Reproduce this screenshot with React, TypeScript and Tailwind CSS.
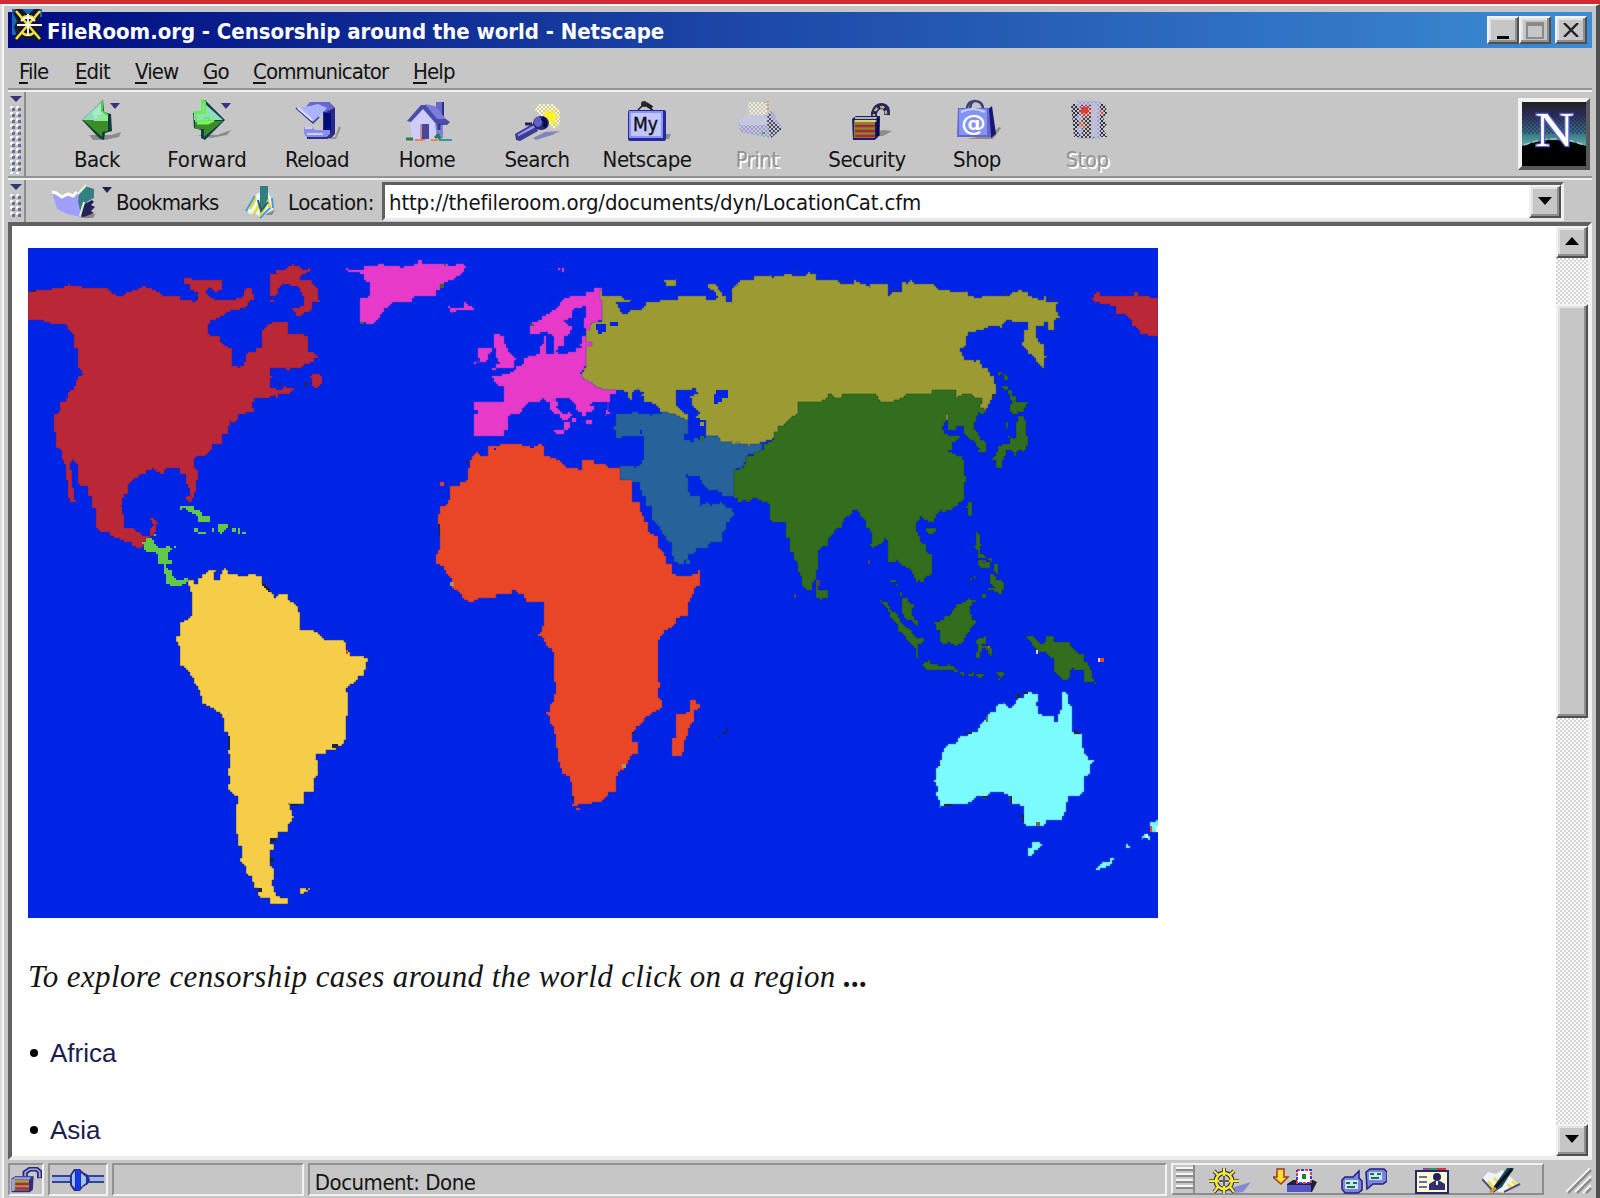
import type { ReactNode } from 'react';

const UI = "font-['DejaVu_Sans_Condensed','DejaVu_Sans',sans-serif] [font-stretch:condensed] text-[22px] leading-none whitespace-nowrap";

/* Turns a rough outline into a blocky one whose corners sit on a coarse grid. */
function blocky(outline: string, cell = 6): string {
  const pts = outline.trim().split(/\s+/).map((p) => p.split(',').map(Number));
  const snap = (v: number) => Math.round(v / cell) * cell;
  let d = `M${snap(pts[0][0])} ${snap(pts[0][1])}`;
  for (let i = 0; i < pts.length; i++) {
    const [ax, ay] = pts[i];
    const [bx, by] = pts[(i + 1) % pts.length];
    const n = Math.max(1, Math.ceil(Math.max(Math.abs(bx - ax), Math.abs(by - ay)) / cell));
    for (let k = 1; k <= n; k++) {
      d += `H${snap(ax + ((bx - ax) * k) / n)}V${snap(ay + ((by - ay) * k) / n)}`;
    }
  }
  return d + 'Z';
}

type Tile = { x: number; y: number; shapes: { fill: string; edge?: string; paths: string[] }[] };

const RED = '#ba2837';
const LIME = '#62c84a';
const GOLD = '#f6cd48';
const PINK = '#e83ac8';
const OLIVE = '#9c9a32';
const STEEL = '#28629a';
const ORANGE = '#e84626';
const GREEN = '#326e1e';
const CYAN = '#7afcfe';
const SEA = '#0024e6';

const tiles: Tile[] = [
  {
    x: 20, y: 240,
    shapes: [
      {
        fill: RED, edge: '#6a2070',
        paths: [
          '24,158 36,150 60,152 80,152 96,146 126,144 144,134 168,138 198,144 262,146 276,164 312,168 316,158 350,150 364,138 398,148 416,158 428,166 476,170 482,180 530,184 534,154 512,150 512,134 494,128 494,116 512,116 520,122 610,122 604,152 584,154 578,142 560,154 560,164 580,180 640,178 672,168 676,142 692,144 704,176 690,182 684,200 660,208 636,210 620,222 600,232 576,242 564,260 564,284 598,290 604,314 634,326 636,376 652,382 670,376 680,340 704,334 708,324 728,322 728,268 744,252 760,246 802,248 804,282 840,280 862,292 864,336 888,340 892,352 880,366 850,376 844,382 814,384 806,394 798,384 750,384 750,408 760,410 750,412 750,444 784,450 792,440 820,448 808,460 780,462 772,472 764,462 750,472 708,476 696,494 700,516 690,514 676,524 656,522 652,540 636,550 630,542 624,580 608,586 606,610 580,614 574,630 556,646 534,650 522,660 522,684 532,690 534,704 528,738 524,766 514,784 498,782 500,770 514,766 508,742 500,728 500,704 484,700 480,684 440,684 430,700 414,698 404,684 382,690 376,700 360,702 354,712 336,724 326,738 322,760 310,764 308,790 302,800 310,826 312,864 342,866 346,876 366,880 368,888 390,888 392,862 400,852 390,836 400,828 404,840 412,846 408,876 396,890 380,900 372,910 366,922 344,920 336,906 306,902 300,892 278,890 270,876 236,872 230,860 228,804 218,798 216,768 206,762 202,740 188,736 176,724 174,680 168,664 156,660 150,676 156,712 160,760 166,784 146,784 152,774 146,768 144,724 138,710 138,676 130,660 122,626 108,620 108,580 102,570 104,524 120,516 120,488 134,484 146,454 162,446 168,420 176,408 190,400 182,384 176,380 174,326 164,318 162,280 150,274 142,256 126,252 98,250 72,242 24,240',
          '752,104 772,102 766,92 790,90 796,84 816,74 838,80 846,92 862,86 874,88 864,98 844,106 842,120 870,122 880,140 892,146 892,172 898,184 880,186 874,212 852,218 846,226 820,224 826,216 814,206 832,204 850,192 850,168 840,154 842,142 820,138 804,132 786,136 774,148 774,164 762,168 752,168',
          '750,178 762,178 762,184 750,184',
          '874,404 888,400 904,408 906,434 892,446 878,434 878,416 868,416',
        ],
      },
      {
        fill: LIME,
        paths: [
          '368,908 380,906 380,896 394,896 404,912 414,924 444,920 456,924 452,936 442,940 444,958 456,960 454,970 440,974 440,986 452,990 456,1010 470,1018 506,1016 500,1030 482,1038 456,1036 438,1026 438,1004 432,996 432,970 410,968 416,952 410,936 372,932',
          '474,808 482,800 518,798 524,810 544,814 546,828 568,830 568,844 530,844 536,828 520,822 500,806',
          '522,864 534,864 534,876 522,876', '534,876 558,876 558,882 534,882', '576,864 582,864 582,876 576,876',
          '594,854 624,852 622,866 612,868 608,884 600,880 596,870',
          '636,864 648,864 648,876 636,876', '654,864 662,864 662,880 654,880', '666,876 678,876 678,882 666,882',
          '402,882 406,882 406,890 398,890', '462,918 468,918 468,924 462,924',
        ],
      },
      { fill: '#20285c', paths: ['774,426 780,426 780,438 774,438', '852,426 864,426 864,438 852,438', '840,270 846,270 846,276 840,276', '36,150 48,150 48,156 36,156', '528,168 534,168 534,178 528,178', '624,852 630,852 630,864 624,864'] },
    ],
  },
  {
    x: 160, y: 550,
    shapes: [
      {
        fill: GOLD, edge: '#3c4060',
        paths: [
          '84,88 96,86 102,100 114,100 114,86 126,84 128,74 144,60 172,60 162,72 162,90 180,90 182,70 192,56 204,58 206,72 240,76 280,74 304,80 306,102 320,108 332,128 344,142 356,134 384,134 386,150 408,164 414,186 420,188 420,240 460,242 474,250 490,270 546,270 560,280 560,298 572,316 606,318 624,328 618,346 612,376 600,380 582,400 564,410 558,426 564,436 566,480 558,510 558,570 548,588 520,600 500,600 498,612 470,612 472,650 474,670 462,690 462,724 432,726 432,762 386,764 394,784 400,804 386,824 384,846 352,848 356,864 344,876 332,880 342,888 340,898 330,904 330,950 342,956 342,990 334,1000 342,1020 352,1040 382,1046 384,1062 330,1060 328,1044 296,1040 296,1018 282,1010 276,980 264,976 254,940 242,932 246,890 234,880 230,840 228,780 234,740 222,730 206,718 208,680 204,660 210,640 206,600 206,550 192,540 192,506 180,488 156,472 130,462 120,430 114,410 104,398 92,370 78,352 60,344 60,290 48,272 50,258 60,256 60,218 84,204 98,186 96,130 88,114',
          '420,1014 440,1018 448,1014 448,1020 430,1030 420,1030',
        ],
      },
      { fill: '#1a2440', paths: ['516,582 534,582 534,594 516,594', '390,762 414,762 414,768 390,768', '330,864 348,864 348,876 330,876', '330,924 340,924 340,936 330,936', '294,1014 306,1014 306,1026 294,1026', '204,558 208,558 208,600 204,600', '306,102 312,102 324,114 330,126 324,120 312,108'] },
      { fill: ORANGE, paths: ['558,300 564,300 564,312 558,312'] },
    ],
  },
  {
    x: 340, y: 240,
    shapes: [
      {
        fill: OLIVE, edge: '#4c5a70',
        paths: [
          '786,150 788,168 846,170 850,178 876,180 870,186 828,188 834,206 846,224 862,222 870,210 904,208 920,188 976,180 1010,178 1012,170 1094,168 1100,178 1122,180 1132,168 1122,150 1106,144 1106,134 1130,134 1132,152 1144,156 1146,166 1160,170 1158,184 1176,184 1182,168 1178,150 1184,136 1206,122 1206,610 1146,608 1132,590 1098,588 1098,540 1068,530 1080,518 1070,504 1054,492 1058,476 1048,470 1072,456 1068,446 1040,450 1008,452 1006,500 1024,512 1030,522 1044,526 1044,540 1020,538 1000,524 966,520 954,498 936,488 910,482 912,470 902,466 910,458 896,446 876,456 876,478 866,474 866,454 838,450 830,448 786,448 760,438 730,418 722,402 738,380 738,270 750,250 786,242 788,190 776,180 776,150',
          '974,122 1006,116 1006,140 990,140 976,130',
        ],
      },
      {
        fill: PINK, edge: '#8a3ac8',
        paths: [
          '18,86 34,90 70,90 74,80 92,80 120,72 134,76 184,82 200,78 234,72 236,62 244,62 246,72 316,74 340,80 346,72 372,74 376,84 368,100 350,116 328,120 320,128 302,132 300,150 288,154 286,166 222,170 214,184 162,188 150,200 136,206 132,216 120,224 116,240 100,250 64,248 58,220 62,176 84,174 92,150 90,128 78,126 70,102 58,96 24,98',
          '326,200 346,204 370,206 374,188 384,190 386,200 402,202 400,208 352,210 336,220 332,210',
          '572,280 572,250 602,240 604,228 628,216 644,208 658,190 672,172 738,168 740,158 758,156 760,146 784,146 778,180 788,192 786,240 762,248 750,256 748,270 736,268 732,236 740,226 736,200 710,204 696,212 694,234 674,244 678,254 694,262 690,284 672,288 670,316 656,320 650,334 642,332 644,290 628,282 620,272 600,280',
          '600,344 602,316 610,312 612,290 618,292 618,340 650,338 664,342 704,334 706,326 728,322 722,310 728,290 738,290 740,304 756,308 754,316 738,320 738,380 722,402 730,418 756,428 760,438 786,448 830,452 826,460 808,464 808,486 802,504 808,520 800,526 802,488 760,488 750,498 764,506 756,514 738,516 736,530 726,530 724,514 710,512 706,490 690,474 636,478 652,490 650,506 664,520 688,518 694,530 686,542 668,540 660,524 642,518 632,504 630,488 620,484 614,474 592,486 568,488 552,506 540,520 510,524 502,540 504,568 494,570 490,586 402,586 402,522 414,520 412,512 402,506 404,486 492,486 494,444 486,436 470,434 458,408 486,408 490,400 520,398 530,380 552,370 554,356 572,346',
          '672,546 690,548 690,566 676,570 672,584 650,584 644,572 672,570', '738,542 756,542 756,550 738,550', '696,534 708,534 708,546 696,546',
          '462,284 494,286 490,306 500,326 510,340 520,350 526,360 520,382 468,382 470,372 482,370 470,350 470,338 464,320', '456,384 468,384 462,392 456,392',
          '414,326 456,324 454,334 444,344 440,366 416,366 402,370 418,360',
          '654,84 660,84 660,90 654,90', '666,84 672,84 672,96 666,96',
        ],
      },
      { fill: SEA, paths: ['766,252 796,254 798,278 782,280 766,264', '810,246 834,246 834,258 810,258', '1122,460 1130,452 1164,452 1164,476 1146,480 1142,488 1122,490'] },
      { fill: OLIVE, paths: ['1144,472 1158,472 1158,480 1144,480', '1062,498 1074,498 1074,506 1062,506', '1080,528 1098,528 1098,540 1080,540', '1080,546 1092,546 1092,556 1080,556'] },
      {
        fill: STEEL, edge: '#185090',
        paths: [
          '830,524 860,520 890,518 930,526 960,520 966,514 1000,524 1044,542 1042,580 1032,582 1034,600 1056,604 1064,594 1084,600 1100,590 1132,588 1146,608 1270,612 1264,632 1218,648 1212,680 1182,690 1182,768 1148,768 1144,754 1110,748 1092,732 1078,710 1040,704 1042,740 1050,768 1078,770 1080,796 1098,788 1110,796 1140,788 1150,800 1176,806 1180,826 1168,846 1158,850 1160,864 1146,880 1144,904 1110,906 1104,922 1070,926 1064,940 1048,944 1044,958 1030,970 1006,968 1000,960 996,908 980,896 970,880 960,860 936,836 938,800 920,796 916,770 904,756 900,726 876,724 846,720 838,718 838,690 830,682 870,676 880,684 900,676 912,650 914,590 886,588 850,590 836,596 828,586 828,568 812,564 828,556',
          '1038,960 1050,960 1050,970 1038,970',
        ],
      },
      { fill: SEA, paths: ['900,570 906,570 906,582 900,582'] },
      { fill: GREEN, paths: ['1080,588 1092,588 1092,600 1080,600', '300,132 312,132 312,142 300,142', '60,246 72,246 72,252 60,252', '312,72 320,72 320,78 312,78', '570,252 580,252 580,258 570,258'] },
    ],
  },
  {
    x: 420, y: 430,
    shapes: [
      {
        fill: ORANGE, edge: '#7c3468',
        paths: [
          '204,50 240,44 290,44 340,48 360,42 370,48 372,78 400,84 414,92 434,110 484,120 488,92 520,92 524,102 550,104 566,114 598,116 600,150 630,152 636,160 636,216 656,218 664,252 674,276 684,280 686,306 700,318 712,320 716,354 732,372 740,400 756,404 758,430 770,438 806,438 830,430 836,422 840,430 838,466 824,474 818,500 804,524 802,556 786,560 768,570 762,590 740,602 724,620 714,636 714,756 724,764 716,780 716,806 724,816 724,836 700,848 672,866 668,880 650,896 636,912 636,936 652,938 654,970 636,972 622,1000 612,1018 600,1020 588,1046 586,1084 570,1086 560,1102 544,1118 486,1120 470,1128 458,1124 460,1104 456,1076 450,1040 428,1028 420,1000 412,970 410,930 402,900 402,886 392,880 388,856 380,848 392,844 390,820 404,808 402,790 410,780 402,740 402,680 396,656 380,646 372,622 356,614 366,600 372,568 372,516 320,514 312,494 294,490 290,480 276,482 276,490 230,492 226,502 176,504 156,516 136,508 120,486 98,468 92,440 78,430 72,408 50,400 50,370 60,352 60,300 52,272 62,230 76,228 90,206 92,170 120,168 122,156 138,154 146,140 144,120 150,96 156,80 166,68 182,76 204,78',
          '822,806 828,820 838,824 838,836 820,842 822,860 818,880 808,884 806,912 796,930 790,960 788,976 758,976 758,926 768,920 768,854 790,852 810,842 812,812',
          '60,156 72,156 72,168 60,168', '468,1134 480,1134 480,1140 468,1140',
        ],
      },
      { fill: SEA, paths: ['330,46 342,46 342,54 330,54', '222,52 228,52 228,60 222,60'] },
      { fill: '#142864', paths: ['136,90 146,90 146,102 136,102', '54,282 60,282 60,318 54,318', '100,156 108,156 108,164 100,164', '906,906 918,906 918,912 906,912', '918,896 924,896 924,906 918,906', '894,918 900,918 900,924 894,924', '456,1098 462,1098 462,1110 456,1110', '638,906 648,906 648,912 638,912'] },
      { fill: '#a09a60', paths: ['90,456 102,456 102,466 90,466', '606,1002 618,1002 618,1012 606,1012'] },
    ],
  },
  {
    x: 700, y: 260,
    shapes: [
      {
        fill: OLIVE, edge: '#4c5a50',
        paths: [
          '98,122 98,86 114,70 118,62 162,60 164,50 200,50 208,44 214,52 246,46 266,40 284,48 306,50 322,38 350,46 350,58 410,60 420,70 462,70 464,62 496,76 508,82 512,74 560,74 566,106 574,96 602,94 608,64 618,64 620,74 632,62 640,72 698,74 712,90 778,96 796,92 804,106 836,116 848,108 926,110 934,96 960,92 982,96 988,110 1010,116 1026,122 1034,110 1040,124 1072,128 1068,152 1078,172 1062,182 1060,208 1046,208 1042,184 1030,188 1030,198 1008,200 1008,228 1016,246 1030,256 1030,286 1042,288 1032,298 1030,322 1014,308 1002,290 986,274 978,262 968,254 974,212 984,206 984,186 950,184 920,180 910,188 908,206 900,198 870,200 846,210 810,218 800,232 796,256 780,272 794,298 826,304 834,298 846,322 860,326 870,346 884,352 886,400 870,432 858,450 840,450 780,480 300,500 200,545 150,556 120,548 98,550',
        ],
      },
      { fill: OLIVE, paths: ['90,132 138,132 138,540 90,540', '102,90 138,78 138,140 102,140'] },
      { fill: '#20307c', paths: ['576,84 594,84 594,90 576,90', '282,30 288,30 288,42 282,42', '912,90 918,90 918,106 912,106', '1044,114 1060,114 1060,120 1044,120', '428,60 434,60 434,72 428,72', '876,402 886,402 886,416 876,416'] },
      {
        fill: GREEN, edge: '#28542c',
        paths: [
          '296,426 360,424 378,414 386,402 396,404 400,414 424,412 428,402 526,402 540,424 576,424 600,416 618,404 696,402 698,390 766,390 770,412 784,402 814,402 820,412 844,416 844,432 836,440 858,452 852,460 834,458 828,486 818,494 822,508 834,518 838,538 860,550 856,574 832,578 838,562 826,544 806,530 794,516 792,500 770,500 768,510 746,508 742,464 736,466 736,484 726,506 734,524 778,530 776,540 756,546 756,568 744,574 762,584 780,590 792,606 792,650 797,656 792,690 792,722 774,726 770,740 738,754 726,752 710,770 700,788 676,780 664,768 650,790 650,818 660,832 664,850 676,856 680,876 696,886 696,944 678,948 670,968 662,962 650,964 642,940 630,926 600,910 596,898 580,908 566,906 566,848 556,836 546,852 520,862 512,850 516,826 510,806 498,800 496,780 486,768 474,752 462,752 452,766 440,770 426,790 424,804 410,806 400,822 384,836 382,858 362,862 354,880 354,930 346,940 346,962 336,964 334,988 310,986 304,946 296,930 292,908 282,896 280,876 270,872 268,836 258,828 258,788 230,786 212,778 212,730 190,724 176,714 134,722 118,726 114,714 102,710 102,632 132,622 138,590 160,586 162,574 190,572 192,552 218,544 222,514 232,512 234,500 258,492 262,480 294,460',
        ],
      },
      {
        fill: GREEN, edge: '#1c3c50',
        paths: [
          '350,968 356,988 382,992 382,1012 366,1018 350,1010', '680,806 706,804 706,814 696,824 680,814', '804,724 816,722 816,768 806,766 800,740',
          '924,392 934,392 936,406 946,414 950,426 978,428 982,434 970,454 944,466 930,452 930,430 938,430',
          '952,470 968,470 978,490 976,526 984,530 984,556 972,574 958,570 946,586 936,572 920,570 920,580 912,600 904,602 904,622 890,622 890,600 878,594 890,580 892,562 906,554 930,550 932,540 926,530 942,538 948,524',
          '894,336 906,336 906,344 900,350 894,344', '912,344 922,348 922,362 912,360', '906,378 922,378 922,388 906,386', '918,484 926,490 920,508',
          '830,818 844,830 840,848 844,858 838,868 842,884 860,886 858,892 836,892 832,868 820,864 820,860 830,856 830,836 820,832 830,830',
          '836,900 866,904 872,924 850,926 836,914', '882,912 892,914 892,940 884,936', '866,894 876,894 876,906 870,906', '872,944 884,942 886,960 900,958 912,974 908,1000 890,998 876,990 860,996 862,986 886,982 870,966', '806,968 812,954 826,950 812,968', '848,1002 858,1002 858,1012 848,1012',
          '572,960 582,960 590,968 578,968', '574,976 594,974 594,980 574,980', '598,994 604,994 604,1010 598,1008',
        ],
      },
      { fill: '#504848', paths: ['136,720 148,720 148,726 136,726', '504,902 510,902 510,910 504,910', '282,1004 288,1004 288,1012 282,1012', '846,900 858,900 858,912 846,912', '350,962 358,962 358,980 350,980'] },
      { fill: RED, edge: '#6a2070', paths: ['1178,116 1188,98 1198,98 1200,108 1300,108 1304,96 1314,98 1314,108 1356,112 1374,116 1374,226 1350,226 1320,218 1316,202 1300,196 1296,182 1280,164 1256,162 1240,172 1248,154 1248,140 1230,134 1182,124'] },
    ],
  },
  {
    x: 860, y: 560,
    shapes: [
      {
        fill: GREEN, edge: '#1c3c50',
        paths: [
          '128,116 142,116 148,130 160,136 156,160 164,178 172,186 172,196 156,182 140,176 128,156',
          '62,122 76,126 86,138 92,152 110,162 120,184 134,200 158,212 158,224 170,236 186,234 196,242 184,250 174,258 174,292 168,290 166,264 140,236 138,226 116,210 114,190 90,170 86,150 74,136',
          '184,314 198,306 204,296 212,312 254,318 262,312 286,324 292,334 250,330 204,328', '298,334 314,338 314,348 298,342', '316,348 334,338 346,334 342,346 326,350', '350,340 378,342 368,354 356,350', '410,334 438,342 424,356 412,358 420,346',
          '224,186 248,180 256,166 276,164 278,148 288,140 290,130 312,128 322,116 346,124 334,138 330,152 336,178 350,184 350,194 332,208 330,218 316,226 312,246 290,260 270,248 252,254 242,238 240,212 228,206',
          '356,232 376,230 380,246 366,256 382,256 394,270 400,290 390,288 380,264 366,264 360,292 348,290 352,262 350,240',
          '500,230 520,230 528,240 538,252 558,246 560,230 580,230 584,246 624,248 640,268 654,282 670,286 672,306 682,308 682,320 692,332 696,350 706,372 694,364 674,364 670,332 640,326 630,336 630,348 624,358 600,356 594,340 584,330 584,296 570,290 558,278 530,270 522,256 512,242',
        ],
      },
      { fill: '#d8d0ff', paths: ['528,270 534,270 534,282 528,282', '714,296 720,296 720,306 714,306'] },
      { fill: ORANGE, paths: ['720,296 734,296 734,306 720,306', '384,256 390,256 390,266 384,266'] },
      {
        fill: CYAN, edge: '#4c90c8',
        paths: [
          '496,398 516,396 518,404 534,404 530,440 536,462 552,468 580,470 584,486 592,484 594,460 604,446 608,398 620,398 624,430 634,440 636,518 664,526 666,560 674,584 686,586 686,600 702,604 690,618 688,640 674,656 672,694 660,708 626,710 618,740 616,758 606,778 566,780 550,796 506,796 494,784 490,736 454,732 448,708 434,696 392,696 380,712 362,710 350,710 344,720 326,732 262,734 242,742 236,714 228,706 234,676 224,662 230,626 240,610 244,590 256,560 272,552 292,546 298,530 320,528 332,518 350,514 362,490 378,478 386,460 404,456 410,436 430,428 444,442 456,440 470,418 492,412',
          '514,848 536,848 544,856 534,870 520,874 518,886 504,886 506,866 518,862',
          '708,926 724,908 750,908 752,892 760,892 758,908 748,920 724,922 720,930', '798,854 812,858 802,866', '846,838 850,824 864,820 868,840 858,832', '872,784 894,782 894,816 874,814',
        ],
      },
      { fill: '#282838', paths: ['468,402 480,402 480,412 468,412', '486,394 502,394 502,400 486,400', '318,518 334,518 334,524 318,524', '640,512 662,518 662,524 640,518', '450,708 458,708 458,732 450,732', '486,762 492,762 492,784 486,784', '250,734 274,734 274,740 250,740', '364,708 382,708 382,714 364,714', '232,610 238,610 238,618 232,618', '514,848 518,848 518,858 514,858'] },
      { fill: '#6c6c4c', paths: ['378,470 386,470 386,486 378,486', '528,784 540,784 540,796 528,796'] },
      { fill: '#fff2c8', paths: ['888,798 894,798 894,814 888,814', '858,820 866,820 866,832 858,832'] },
      { fill: ORANGE, paths: ['870,796 876,796 876,814 870,814'] },
    ],
  },
];

function WorldMap() {
  return (
    <svg className="block h-[670px] w-[1130px]" viewBox="28 248 1130 670" role="img" aria-label="World map">
      <rect x="28" y="248" width="1130" height="670" fill={SEA} />
      {tiles.map((t, i) => (
        <g key={i} transform={`translate(${t.x} ${t.y}) scale(0.33333)`}>
          {t.shapes.map((s, j) => (
            <path key={j} d={s.paths.map((p) => blocky(p)).join('')} fill={s.fill} stroke={s.edge ?? 'none'} strokeWidth={s.edge ? 1.6 : 0} />
          ))}
        </g>
      ))}
    </svg>
  );
}

/* ---------- toolbar icons, each on a 60 x 44 field ---------- */

const Field = ({ children }: { children: ReactNode }) => (
  <svg className="h-[44px] w-[60px]" viewBox="0 0 60 44">
    <defs>
      <pattern id="dots" width="4" height="4" patternUnits="userSpaceOnUse">
        <rect width="2" height="2" fill="#c6c6c6" />
        <rect x="2" y="2" width="2" height="2" fill="#c6c6c6" />
      </pattern>
    </defs>
    {children}
  </svg>
);

const BackIcon = () => (
  <Field>
    <path d="M22 37h22l10-3-2 5-14 3H26z" fill="#8c8c8c" />
    <path d="M15 22 36 2l1 12 7 2 1 17-7 2-1 7-5-2z" fill="#123c3c" />
    <path d="M15 22 35 3v10l6 3v6z" fill="#8fdcb8" />
    <path d="M25 15 34 6v7l6 4v5H28z" fill="#a8e8cc" />
    <path d="M16 22h25v11l-6 1v5z" fill="#3c8c28" />
    <path d="M26 23h15v-6l-6-2-1 2h-4v3z" fill="#8ce89c" />
    <path d="M35 3v10l6 4" stroke="#50d040" strokeWidth="2" fill="none" />
    <path d="M43 5h10l-5 6z" fill="#34347c" />
  </Field>
);
const ForwardIcon = () => (
  <Field>
    <path d="M20 37h20l14-5-4 5-16 3z" fill="#8c8c8c" />
    <path d="M16 14h8V3l4-1 20 20-20 20-4-2v-8l-7-2z" fill="#123c4c" />
    <path d="M17 15h9V4l20 18H17z" fill="#8fdcb8" />
    <path d="M18 23h28L27 39v-8h-9z" fill="#3c8c28" />
    <path d="M16 14h9V2l3 2v11h-9v8h13v-3h-5" stroke="#64f050" strokeWidth="2" fill="none" />
    <path d="M20 25h11l6-3" stroke="#7cf060" strokeWidth="3" fill="none" />
    <path d="M44 5h10l-5 6z" fill="#34347c" />
  </Field>
);
const ReloadIcon = () => (
  <Field>
    <path d="M22 39h26l4-11 2 2-5 11H26z" fill="#949494" />
    <path d="M36 4h6l6 6v26l-4 4H32v-8h4z" fill="#28288c" />
    <path d="M37 15h7v18h-7z" fill="#000c78" />
    <path d="M18 10 23 4h19l5 6-8 4z" fill="#6868d0" />
    <path d="m9 10 14-2 8-2 9 4-14 15z" fill="#aab4ff" />
    <path d="m9 10 17 15 6-6" stroke="#3c3c90" strokeWidth="1.6" fill="none" />
    <path d="m11 10 14 12" stroke="#e0e4ff" strokeWidth="2" />
    <path d="M17 29h8l3 3h15v4l-4 4H20l-3-4z" fill="#8c8cec" />
    <path d="M18 30h7M20 36h16" stroke="#d0d0ff" strokeWidth="2" />
    <path d="M20 40h20l5-4" stroke="#30308c" strokeWidth="2" fill="none" />
  </Field>
);
const HomeIcon = () => (
  <Field>
    <path d="M39 4h7v17h-7z" fill="#6868d0" />
    <path d="M45 4h2v16h-2z" fill="#30307c" />
    <path d="M13 23 26 10l15 13v18H15z" fill="#ccccff" />
    <path d="M38 26h8v14h-6z" fill="#8080dc" />
    <path d="M24 7h5l24 17-3 3H40L26 11 14 24l-4-1z" fill="#4c4ca8" />
    <path d="m28 6 10 2 11 13H40z" fill="#7c7ce0" />
    <path d="M24 26h8v15h-8z" fill="#484898" />
    <path d="M24 26v14" stroke="#d88888" strokeWidth="2" />
    <path d="M42 26v6" stroke="#283890" strokeWidth="3" />
    <path d="M9 41h7M38 40l3-3 2 4" stroke="#288048" strokeWidth="3" fill="none" />
    <path d="M18 42h10M34 42h7" stroke="#e48850" strokeWidth="2" />
    <path d="M42 42h13" stroke="#389898" strokeWidth="2" />
  </Field>
);
const SearchIcon = () => (
  <Field>
    <path d="M28 12l4-6h14l7 7v13l-5 5-7-4z" fill="#fffbb8" />
    <path d="M28 12l4-6h14l7 7v13l-5 5-7-4z" fill="url(#dots)" />
    <path d="m37 16 3-6 2 5 8-5-4 7 8 1-8 3 5 7-9-4z" fill="#fff020" />
    <path d="M26 40l12-6 15-1-8 4-16 5z" fill="#8484bc" />
    <path d="M8 36 27 25l4 8-18 10-4-1z" fill="#3c3c90" />
    <path d="M10 37 27 27l2 2-17 9z" fill="#9898f4" />
    <path d="M18 26h7" stroke="#20205c" strokeWidth="3" />
    <ellipse cx="34" cy="25" rx="8" ry="7" fill="#282878" />
    <ellipse cx="31" cy="24" rx="4" ry="5" fill="#6060c8" />
    <path d="M35 20q6 4 2 9" fill="none" stroke="#08084c" strokeWidth="4" />
  </Field>
);
const NetscapeIcon = () => (
  <Field>
    <path d="M21 12 27 6l10 7" stroke="#202020" strokeWidth="1.5" fill="none" />
    <path d="M29 6l6 4" stroke="#202020" strokeWidth="4" />
    <circle cx="27" cy="6" r="3" fill="#282828" />
    <path d="M49 36h5l-2 5h-6z" fill="#8c8c94" />
    <rect x="11" y="12" width="38" height="31" rx="2" fill="#2428a0" />
    <rect x="12" y="13" width="34" height="27" fill="#8c94f0" />
    <rect x="14" y="15" width="30" height="23" fill="#c0c8ff" />
    <text x="16" y="33" fontFamily="DejaVu Sans Condensed" fontSize="20" fill="#101010" stroke="#101010" strokeWidth=".4" textLength="25" lengthAdjust="spacingAndGlyphs">My</text>
  </Field>
);
const PrintIcon = () => (
  <Field>
    <path d="M21 4h19v16H22z" fill="#fffad8" opacity=".7" />
    <path d="M38 4h3v8" stroke="#d8a060" strokeWidth="2" fill="none" />
    <path d="m11 22 8-5h22l5-3 9 16-12 10-30-6z" fill="#9c9ce0" />
    <path d="m11 22 8-5h18l5 6-4 4H13z" fill="#c8c8f4" />
    <path d="M41 16l4-4-2 7 12 12-11 9-4-15z" fill="#484870" />
    <rect width="60" height="44" fill="url(#dots)" />
    <rect x="35" y="34" width="3" height="2" fill="#30b030" />
  </Field>
);
const LockShape = () => (
  <>
    <path d="M38 38h8l9-5-8-1-6 1z" fill="#8c8c8c" />
    <path d="M37 21v-6q2-7 8-7 6 1 5 9" stroke="#242464" strokeWidth="6" fill="none" />
    <path d="M37 20v-5q2-6 8-6 4 1 4 7" stroke="#d0b060" strokeWidth="2.5" fill="none" strokeDasharray="4 3" />
    <path d="M15 21l4-3h24l-1 20-4 4H16z" fill="#1c1c70" />
    <path d="M17 22h21v18H17z" fill="#8c8428" />
    <path d="M18 23h22M18 20h22" stroke="#f0e8a8" strokeWidth="1.6" />
    <path d="M18 28h20M18 33h20M18 38h20" stroke="#a82840" strokeWidth="2.6" />
    <path d="M41 20v18" stroke="#080848" strokeWidth="3" />
  </>
);
const SecurityIcon = () => <Field><LockShape /></Field>;
const ShopIcon = () => (
  <Field>
    <path d="M20 41h26l8-11-2-1-7 7z" fill="#8c8c8c" />
    <path d="M20 12q0-9 8-9t8 9M27 3q-4 2-4 10" stroke="#404078" strokeWidth="2.5" fill="none" />
    <path d="m40 12 5-4 4 28-5 4z" fill="#181870" />
    <path d="M11 10h31l2 29H10z" fill="#6464d4" />
    <path d="M12 11h28v26H12z" fill="#8494f4" />
    <path d="M14 14q12-6 24 0" stroke="#c4d4ff" strokeWidth="2" fill="none" />
    <text x="14" y="33" fontFamily="DejaVu Sans" fontWeight="bold" fontSize="23" fill="#fff" textLength="25" lengthAdjust="spacingAndGlyphs">@</text>
  </Field>
);
const StopIcon = () => (
  <Field>
    <path d="M20 3h24v38H20z" fill="#a0a0e8" />
    <path d="M14 6h5l5 9-5 5 5 6-5 5 5 8h-7M43 6h5l2 9-4 5 4 6-4 5 5 8h-8" fill="#303048" />
    <path d="M24 7h14v8l-4 5 4 8-4 4 3 8H23l3-8-4-6 4-6-4-6z" fill="#404048" />
    <path d="M34 5h6v34h-6z" fill="#b8b8e8" />
    <circle cx="28" cy="13" r="6" fill="#e03030" />
    <path d="M23 23l5 7M45 12v5" stroke="#e05040" strokeWidth="4" />
    <rect width="60" height="44" fill="url(#dots)" />
    <path d="M24 9h7v6h-7z" fill="#d84040" />
  </Field>
);

const buttons: { label: string; icon: () => ReactNode; off?: boolean }[] = [
  { label: 'Back', icon: BackIcon },
  { label: 'Forward', icon: ForwardIcon },
  { label: 'Reload', icon: ReloadIcon },
  { label: 'Home', icon: HomeIcon },
  { label: 'Search', icon: SearchIcon },
  { label: 'Netscape', icon: NetscapeIcon },
  { label: 'Print', icon: PrintIcon, off: true },
  { label: 'Security', icon: SecurityIcon },
  { label: 'Shop', icon: ShopIcon },
  { label: 'Stop', icon: StopIcon, off: true },
];

const WheelIcon = () => (
  <svg className="h-[33px] w-[32px] shrink-0" viewBox="0 0 32 33">
    <path d="M0 0h30v8H22v18H0z" fill="#1868b8" />
    <path d="M4 0h6l6 6 6-6h6v8l-4 8 6 2-5 4 5 8-6 3-6-5-2 5-4-5-6 4H2l2-8-2-6 3-6-4-8z" fill="#18182c" />
    <g stroke="#f0e040" strokeWidth="2.6" fill="none"><path d="M4 2l24 28M28 2 4 30" /><path d="M9 10q7-6 14 0M9 23q7 6 14 0" /></g>
    <path d="M16 5v22M5 16h25M9 12q7-7 14 0" stroke="#fff" strokeWidth="1.8" fill="none" />
  </svg>
);

const Grip = ({ tall }: { tall?: boolean }) => (
  <div className="flex w-[18px] flex-col items-center border-r-2 border-[#8c8c8c] pt-[4px]">
    <svg className="h-[6px] w-[12px]" viewBox="0 0 12 6"><path d="M0 0h12L6 6z" fill="#34347c" /></svg>
    <svg className={tall ? 'mt-[4px] h-[68px] w-[12px]' : 'mt-[4px] h-[24px] w-[12px]'}>
      <defs>
        <pattern id="grip" width="6" height="6" patternUnits="userSpaceOnUse">
          <rect width="3" height="3" fill="#f4f4f4" />
          <rect x="2" y="2" width="3" height="3" fill="#6c6c98" />
        </pattern>
      </defs>
      <rect width="12" height="68" fill="url(#grip)" />
    </svg>
  </div>
);

const RAISED = 'border-2 border-t-[#f2f2f2] border-l-[#f2f2f2] border-r-[#505050] border-b-[#505050] bg-[#c6c6c6] shadow-[inset_-2px_-2px_0_#8e8e8e,inset_2px_2px_0_#e2e2e2] flex items-center justify-center shrink-0';

const Tri = ({ up }: { up?: boolean }) => (
  <svg className="mb-[2px] h-[8px] w-[14px]" viewBox="0 0 14 8"><path d={up ? 'M0 8h14L7 0z' : 'M0 0h14L7 8z'} fill="#000" /></svg>
);

const Rule = () => (
  <div className="h-[4px] shrink-0 border-t-2 border-b-2 border-t-[#929292] border-b-[#f0f0f0]" />
);

const menus = ['File', 'Edit', 'View', 'Go', 'Communicator', 'Help'];

const SINK = 'border-2 border-t-[#929292] border-l-[#929292] border-r-[#f2f2f2] border-b-[#f2f2f2] flex items-center overflow-hidden';

export default function App() {
  return (
    <div className="flex h-[1198px] w-[1600px] flex-col overflow-hidden bg-[#c6c6c6] text-[#141414]">
      <div className="h-[4px] shrink-0 bg-[#d02c32]" />
      <div className="flex min-h-0 flex-1 flex-col border-l-2 border-[#dcdcdc]">
        <div className="flex min-h-0 flex-1 flex-col border-t-2 border-l-2 border-r-[4px] border-t-[#f2f2f2] border-l-[#f6f6f6] border-r-[#505050] pt-[6px] pr-[4px] pl-[4px]">
          {/* title bar */}
          <div className="flex h-[36px] shrink-0 items-center bg-[linear-gradient(to_right,#000c80,#3c8cd4)] pr-[5px]">
            <div className="-mt-[6px] ml-[4px] h-[36px]"><WheelIcon /></div>
            <div className="mt-[3px] ml-[3px] flex-1 font-['DejaVu_Sans_Condensed','DejaVu_Sans',sans-serif] text-[22px] leading-none font-bold tracking-[-0.05px] whitespace-nowrap text-white [font-stretch:condensed]">
              FileRoom.org - Censorship around the world - Netscape
            </div>
            <div className={`${RAISED} h-[28px] w-[32px]`}><div className="mt-[14px] h-[3px] w-[12px] bg-black" /></div>
            <div className={`${RAISED} h-[28px] w-[32px]`}><div className="h-[17px] w-[18px] border-2 border-t-4 border-[#8a8a8a]" /></div>
            <div className={`${RAISED} ml-[4px] h-[28px] w-[32px]`}>
              <svg className="h-[14px] w-[16px]" viewBox="0 0 16 14"><path d="M1 0l14 14M15 0 1 14" stroke="#222" strokeWidth="2.4" /></svg>
            </div>
          </div>

          {/* menu bar */}
          <div className={`${UI} flex h-[40px] shrink-0 items-center pt-[8px] pl-[11px] tracking-[-0.9px]`}>
            {menus.map((m, i) => (
              <span key={m} className={['w-[56px]', 'w-[60px]', 'w-[68px]', 'w-[50px]', 'w-[160px]', 'w-[60px]'][i]}>
                <span className="underline decoration-2 underline-offset-[3px]">{m[0]}</span>{m.slice(1)}
              </span>
            ))}
          </div>
          <Rule />

          {/* navigation toolbar */}
          <div className="flex h-[84px] shrink-0">
            <Grip tall />
            <div className="ml-[16px] grid flex-1 grid-cols-[repeat(10,110px)]">
              {buttons.map(({ label, icon: Icon, off }) => (
                <div key={label} className="flex flex-col items-center pt-[6px]">
                  <Icon />
                  <span className={`${UI} mt-[7px] ${label === 'Forward' ? 'tracking-[0px]' : 'tracking-[-0.5px]'} ${off ? 'text-[#949494] [text-shadow:2px_2px_0_#fff]' : ''}`}>{label}</span>
                </div>
              ))}
            </div>
            <div className="mt-[6px] mr-[2px] h-[72px] w-[72px] shrink-0 border-[4px] border-t-[#f2f2f2] border-r-[#585858] border-b-[#585858] border-l-[#f2f2f2]">
              <svg className="block h-[64px] w-[64px]" viewBox="0 0 64 64">
                <defs>
                  <linearGradient id="dusk" x1="0" y1="0" x2="0" y2="1">
                    <stop offset="0" stopColor="#202020" />
                    <stop offset=".22" stopColor="#30305c" />
                    <stop offset=".5" stopColor="#387888" />
                    <stop offset=".7" stopColor="#68b0a8" />
                  </linearGradient>
                  <pattern id="haze" width="4" height="4" patternUnits="userSpaceOnUse">
                    <rect width="2" height="2" fill="#202048" opacity=".45" />
                    <rect x="2" y="2" width="2" height="2" fill="#202048" opacity=".45" />
                  </pattern>
                </defs>
                <rect width="64" height="64" fill="url(#dusk)" />
                <rect y="4" width="64" height="28" fill="url(#haze)" />
                <path d="M0 44Q32 32 64 44v20H0z" fill="#000" />
                <path d="M2 43Q32 31 62 43" stroke="#9cc8c0" strokeWidth="1.5" fill="none" strokeDasharray="6 3" />
                <text x="13" y="44" fontFamily="Liberation Serif" fontSize="48" stroke="#5c5cd0" strokeWidth="2.4" fill="#fff" paintOrder="stroke" textLength="39" lengthAdjust="spacingAndGlyphs">N</text>
              </svg>
            </div>
          </div>
          <Rule />

          {/* location toolbar */}
          <div className="flex h-[42px] shrink-0">
            <Grip />
            <svg className="mt-[4px] ml-[25px] h-[36px] w-[62px]" viewBox="0 0 62 36">
              <path d="M30 30h14l2-3-4 7H30z" fill="#888" />
              <path d="m28 32 2-10 11-6 2 2-3 3 4 2-4 4 3 2-10 4z" fill="#24245c" />
              <path d="M1 8l4 1 6 4 6-3 6 2 4-5 2 8 1 18-14-3-10-5z" fill="#a0a0fc" />
              <path d="M1 8l4 1 6 4 6-3 5 2 4-4" stroke="#fff" strokeWidth="3" fill="none" />
              <path d="m28 9 8-7h-2l9 3v9l-6 3-8 9-2-8z" fill="#348080" />
              <path d="m27 10 8-9M29 32l4-14" stroke="#e8f4d8" strokeWidth="2" />
              <path d="M51 3h10l-5 6z" fill="#202050" />
            </svg>
            <span className={`${UI} mt-[12px] ml-[3px] w-[129px] tracking-[-0.9px]`}>Bookmarks</span>
            <svg className="mt-[4px] h-[36px] w-[36px]" viewBox="0 0 36 36">
              <path d="m16 32 14-6-3 5H14z" fill="#888" />
              <path d="m2 25 7-12 4-4 10-1 4 8 1 9-12 9-6-5-6 1z" fill="#e8f8ff" />
              <path d="m1 27 9-15M26 23l-11 11M27 14l1 10" stroke="#4898e0" strokeWidth="2" />
              <path d="m11 14-6 11M9 30l6-11M15 32l6-10M22 14l3 10" stroke="#e8d820" strokeWidth="2.4" />
              <path d="M15 2h8v12l-4 10-4 2z" fill="#308080" />
              <path d="m13 16 3 11 7-9" stroke="#206070" strokeWidth="2" fill="none" />
            </svg>
            <span className={`${UI} mt-[12px] ml-[7px] w-[94px] tracking-[-0.5px]`}>Location:</span>
            <div className="mt-[2px] flex h-[39px] w-[1182px] border-[3px] border-t-[#606060] border-r-[#f0f0f0] border-b-[#e8e8e8] border-l-[#606060] bg-white">
              <span className={`${UI} mt-[7px] ml-[4px] flex-1 tracking-[-0.17px]`}>http://thefileroom.org/documents/dyn/LocationCat.cfm</span>
              <div className={`${RAISED} h-[33px] w-[32px]`}><Tri /></div>
            </div>
          </div>

          {/* page */}
          <div className="flex h-[938px] shrink-0 border-t-[4px] border-r-[4px] border-b-[4px] border-l-[4px] border-t-[#606060] border-r-[#f2f2f2] border-b-[#ececec] border-l-[#606060]">
            <div className="flex-1 overflow-hidden bg-white pt-[22px] pl-[16px]">
              <WorldMap />
              <p className="mt-[41px] font-['Liberation_Serif',serif] text-[31px] leading-[36px] tracking-[0.38px] whitespace-nowrap italic">
                To explore censorship cases around the world click on a region <b>...</b>
              </p>
              <ul className="mt-[39px] flex flex-col gap-[40px] font-['Liberation_Sans',sans-serif] text-[26px] leading-[36px] text-[#1c1c50]">
                {['Africa', 'Asia'].map((r) => (
                  <li key={r} className="flex items-center">
                    <span className="mt-[1px] ml-[2px] h-[8px] w-[8px] rounded-full bg-black" />
                    <span className="mt-[1px] ml-[12px]">{r}</span>
                  </li>
                ))}
              </ul>
            </div>
            <div className="flex w-[32px] flex-col bg-[repeating-conic-gradient(#fafafa_0_25%,#d4d4d4_0_50%)] bg-[length:4px_4px]">
              <div className={`${RAISED} h-[32px] w-[32px]`}><Tri up /></div>
              <div className={`${RAISED} mt-[46px] h-[414px] w-[32px]`} />
              <div className={`${RAISED} mt-auto h-[32px] w-[32px]`}><Tri /></div>
            </div>
          </div>

          {/* status bar */}
          <div className="mt-[3px] flex h-[33px] shrink-0">
            <div className={`${SINK} w-[36px]`}>
              <svg className="h-[27px] w-[34px]" viewBox="12 2 42 42" preserveAspectRatio="none">
                <path d="M32 18v-6l6-5h9l4 4v10" stroke="#242478" strokeWidth="7" fill="none" />
                <path d="M32 18v-6l6-5h9l4 4v9" stroke="#a0a8e8" strokeWidth="2.4" fill="none" />
                <path d="M14 21l5-3h24l-1 21-4 4H14z" fill="#2c2c80" />
                <path d="M17 23h20v17H17z" fill="#a89840" />
                <path d="M16 22v19M17 21h22" stroke="#98a8f0" strokeWidth="3" />
                <path d="M19 30h18M19 37h18" stroke="#a82848" strokeWidth="4" />
              </svg>
            </div>
            <div className={`${SINK} ml-[4px] w-[60px]`}>
              <svg className="h-[24px] w-[56px]" viewBox="0 0 56 24">
                <path d="M2 8h18M2 14h18M36 8h18M36 14h18" stroke="#404090" strokeWidth="2" />
                <path d="M2 11h52" stroke="#98b8e8" strokeWidth="4" />
                <path d="M20 7 24 1h6l3 3 5 3 2 5-2 4-5 3-3 4h-6l-4-6z" fill="#2c2c90" />
                <path d="M22 7 25 3v17l-3-3zM31 5l5 4v6l-5 4z" fill="#98c8f8" />
                <path d="M28 2v20" stroke="#1838f0" strokeWidth="4" />
              </svg>
            </div>
            <div className={`${SINK} ml-[4px] w-[192px]`} />
            <div className={`${SINK} ml-[4px] w-[860px]`}>
              <span className={`${UI} mt-[6px] ml-[5px] tracking-[-0.5px]`}>Document: Done</span>
            </div>
            <div className="ml-[4px] flex h-[32px] w-[373px] items-center border-2 border-t-[#f2f2f2] border-r-[#8c8c8c] border-b-[#8c8c8c] border-l-[#f2f2f2]">
              <div className="ml-[3px] h-[24px] w-[17px] bg-[repeating-linear-gradient(to_bottom,#f6f6f6_0_2px,#8c8c8c_2px_4px,#c6c6c6_4px_6px)]" />
              <div className="h-full w-[2px] bg-[#8c8c8c]" />
              <svg className="mt-[3px] ml-[12px] h-[26px] w-[44px]" viewBox="0 0 44 26">
                <path d="m24 20 20-6-8 10-10 1z" fill="#8888d0" />
                <path d="M17 0v26M2 13h30M7 3l20 21M27 3 7 24" stroke="#283060" strokeWidth="4" />
                <circle cx="17" cy="13" r="8" fill="#c6c6c6" stroke="#283060" strokeWidth="5" />
                <path d="M17 0v26M2 13h30M7 3l4 4M23 19l4 5M27 3l-4 4M11 19l-4 5" stroke="#f8e830" strokeWidth="2.4" />
                <circle cx="17" cy="13" r="8" fill="none" stroke="#f8e830" strokeWidth="2.6" />
                <path d="M17 8v10M12 13h10" stroke="#5c5c70" strokeWidth="2" />
              </svg>
              <svg className="mt-[3px] ml-[22px] h-[26px] w-[44px]" viewBox="0 0 44 26">
                <path d="M4 1h7v8h4l-7 7-8-7h4z" fill="#f8e030" stroke="#a03820" strokeWidth="1.5" />
                <path d="m14 16 6-4h20l4 2-5 10H14z" fill="#20203c" />
                <path d="M14 17h24v7H14z" fill="#5454c4" />
                <path d="M24 2h14v13H24z" fill="#fff" />
                <path d="M24 2h14v13H24z" fill="none" stroke="#e04040" strokeWidth="2" strokeDasharray="3 5" />
                <path d="M24 2h14v13H24z" fill="none" stroke="#2040e0" strokeWidth="2" strokeDasharray="3 5" strokeDashoffset="4" />
                <path d="M29 6h4v5h-4z" fill="#208040" />
              </svg>
              <svg className="mt-[3px] ml-[24px] h-[26px] w-[46px]" viewBox="0 0 46 26">
                <path d="m1 12 3-3h8l6-6v7l3 3v9l-4 3H4l-3-4z" fill="#8080e0" stroke="#202080" strokeWidth="1.5" />
                <path d="M4 12h13v9H4z" fill="#c8e8f0" />
                <path d="m25 4 4-3h14l3 3v9l-4 3H32l-6 5z" fill="#8080e0" stroke="#202080" strokeWidth="1.5" />
                <path d="M28 4h13v8H28z" fill="#c8e8f0" />
                <path d="M5 15h4m3 0h4M6 19h8M29 6h4m3 0h4M30 10h8" stroke="#187050" strokeWidth="2" />
              </svg>
              <svg className="mt-[3px] ml-[28px] h-[26px] w-[34px]" viewBox="0 0 34 26">
                <path d="M8 0h8v3H8z" fill="#a040a0" /><path d="M14 0h8v3h-8z" fill="#20a060" /><path d="M22 0h9v4h-9z" fill="#e03030" />
                <path d="M1 3h32v22H1z" fill="#fffbd0" stroke="#282868" strokeWidth="2" />
                <path d="M4 9h8M4 14h8M4 19h8" stroke="#6868b8" strokeWidth="2" />
                <circle cx="22" cy="9" r="4" fill="#202060" /><path d="M14 22v-6l5-3h6l5 3v6z" fill="#303070" />
                <path d="M21 13h2v4h-2z" fill="#fff" />
              </svg>
              <svg className="mt-[3px] ml-[33px] h-[26px] w-[40px]" viewBox="0 0 40 26">
                <path d="m0 11 6-7 8 2 6-4 18 15-14 8-10-2z" fill="#f0f4f8" />
                <path d="m6 13 6 8M12 10l6 6M26 16l4 5M30 13l5 4" stroke="#f0e050" strokeWidth="3" />
                <path d="m0 11 11 12M22 24l16-8" stroke="#505080" strokeWidth="2" />
                <path d="M25 0h7L20 19l-9 6 1-7z" fill="#184c58" />
                <path d="M30 1 13 20" stroke="#101020" strokeWidth="3" />
                <path d="m8 24 6-4" stroke="#d89030" strokeWidth="3" />
              </svg>
            </div>
            <svg className="mt-auto mb-[2px] ml-[22px] h-[26px] w-[26px]" viewBox="0 0 26 26">
              <path d="M2 25 25 2M11 25 25 11M20 25l5-5" stroke="#8a8a8a" strokeWidth="2.6" />
              <path d="M0 24 24 0M9 24 25 8M17 25l8-8" stroke="#f4f4f4" strokeWidth="1.8" />
            </svg>
          </div>
        </div>
      </div>
    </div>
  );
}
